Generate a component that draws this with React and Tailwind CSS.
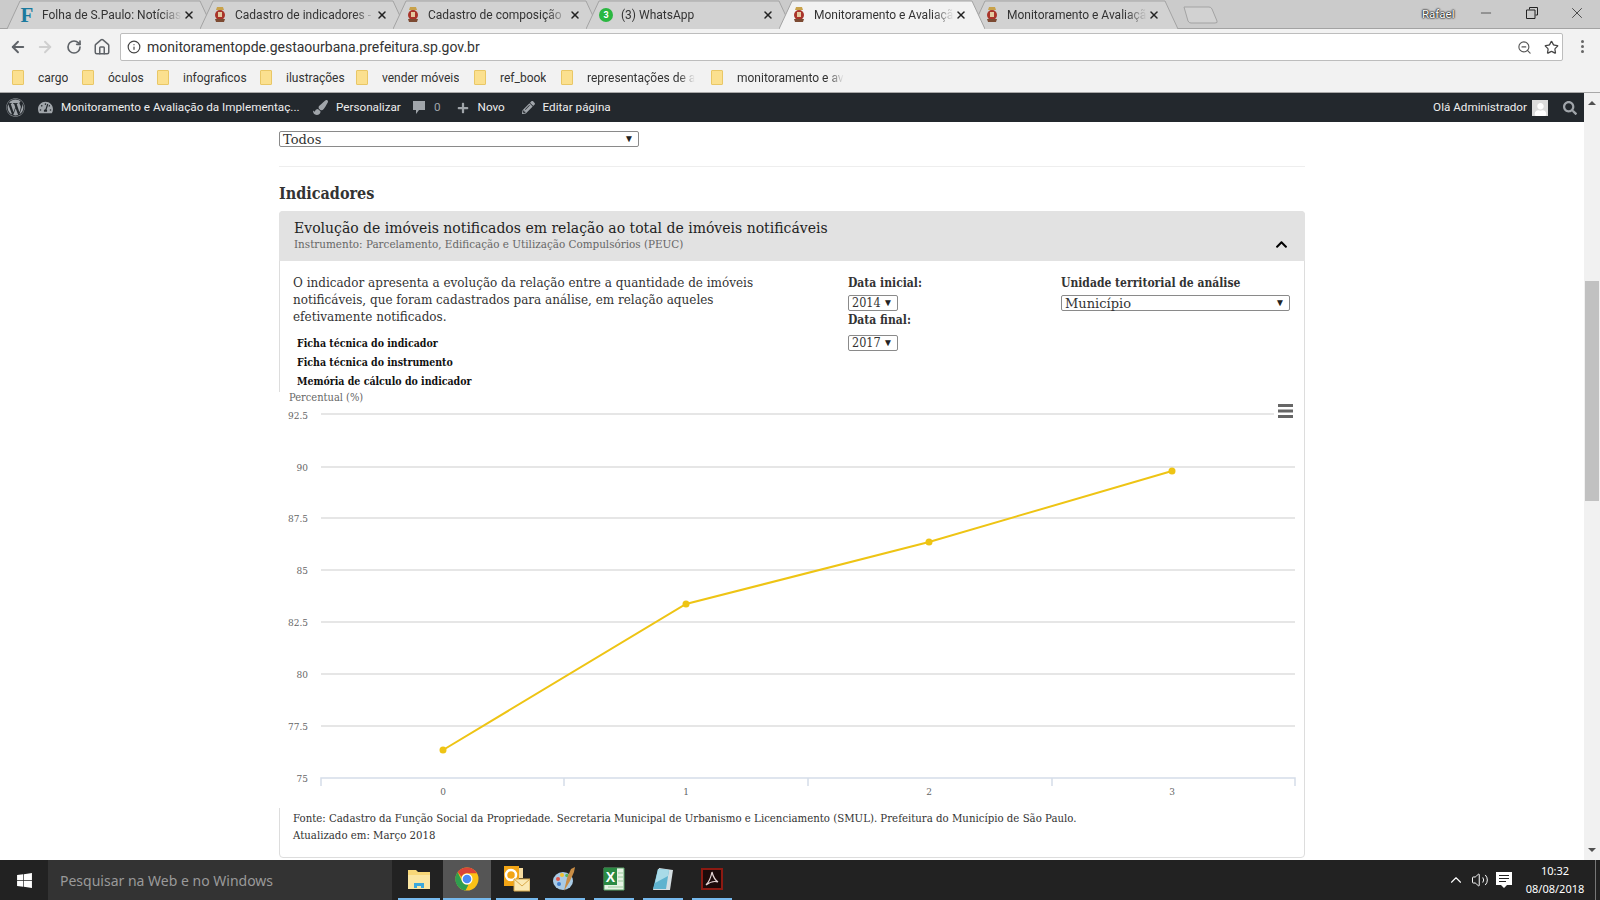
import React from "react";
import { ArrowLeft, ArrowRight, RotateCw, Home, Info, ZoomOut, Star, X, Minus, ChevronUp, Volume2 } from "lucide-react";
import { FaWordpress, FaTachometerAlt, FaPaintBrush, FaPlus, FaPencilAlt, FaSearch, FaWindows, FaChevronUp, FaUser } from "react-icons/fa";

const UI = "font-['Roboto',sans-serif]";
const SLAB = "font-['DejaVu_Serif',serif]";
const SLAB_NARROW = "font-['DejaVu_Serif_Condensed','DejaVu_Serif',serif]";
const FADE = "[mask-image:linear-gradient(to_right,black_85%,transparent)]";

const TABS = [
  { id: 1, icon: "folha", title: "Folha de S.Paulo: Notícias" },
  { id: 2, icon: "sp", title: "Cadastro de indicadores - " },
  { id: 3, icon: "sp", title: "Cadastro de composição" },
  { id: 4, icon: "wa", title: "(3) WhatsApp" },
  { id: 5, icon: "sp", title: "Monitoramento e Avaliação", active: true },
  { id: 6, icon: "sp", title: "Monitoramento e Avaliação" },
];

const BOOKMARKS = [
  { label: "cargo", w: "w-[70px]" },
  { label: "óculos", w: "w-[75px]" },
  { label: "infograficos", w: "w-[103px]" },
  { label: "ilustrações", w: "w-[96px]" },
  { label: "vender móveis", w: "w-[118px]" },
  { label: "ref_book", w: "w-[87px]" },
  { label: "representações de a", w: "w-[150px]", fade: true },
  { label: "monitoramento e av", w: "w-[134px]", fade: true },
];

const Y_TICKS = [
  { label: "92.5", y: 414 },
  { label: "90", y: 467 },
  { label: "87.5", y: 518 },
  { label: "85", y: 570 },
  { label: "82.5", y: 622 },
  { label: "80", y: 674 },
  { label: "77.5", y: 726 },
];
const POINTS = [
  { x: 443, y: 750, label: "0" },
  { x: 686, y: 604, label: "1" },
  { x: 929, y: 542, label: "2" },
  { x: 1172, y: 471, label: "3" },
];

const SpIcon = () => (
  <svg width="14" height="16" viewBox="0 0 14 16" className="shrink-0">
    <path d="M4 0h6l1 3H3z" fill="#c9a24a" />
    <ellipse cx="7" cy="8" rx="5" ry="5" fill="#a9342b" />
    <path d="M5 5h4v5H5z" fill="#e3c9a0" />
    <path d="M2 12h10l-1 3H3z" fill="#7c4a32" />
  </svg>
);

const TabIcon = ({ icon }) => {
  if (icon === "folha") {
    return <span className="w-[14px] shrink-0 text-center font-['Liberation_Serif',serif] text-[21px] font-bold leading-none text-[#1b7a9e]">F</span>;
  }
  if (icon === "wa") {
    return (
      <span className="flex h-[14px] w-[14px] shrink-0 items-center justify-center rounded-full bg-[#2bb741] text-[9px] font-bold leading-none text-white">3</span>
    );
  }
  return <SpIcon />;
};

const Tab = ({ tab }) => (
  <div className={`relative h-[28px] w-[193px] shrink-0 ${tab.active ? "z-10" : ""}`}>
    <svg width="206" height="29" className="absolute left-0 top-0">
      <path d="M0 29 L13 1 H193 L206 29" fill={tab.active ? "#f2f2f2" : "#d2d2d2"} stroke="#a3a3a3" />
    </svg>
    <div className="relative flex h-full items-center pl-[13px] pt-[2px]">
      <TabIcon icon={tab.icon} />
      <span className={`ml-[8px] w-[140px] overflow-hidden whitespace-nowrap text-[12px] text-[#333] ${FADE}`}>
        {tab.title}
      </span>
      <X size={12} strokeWidth={3} className="ml-[1px] shrink-0 text-[#222]" />
    </div>
  </div>
);

const TitleBar = () => (
  <div className="flex h-[28px] items-start bg-[#cbcbcb] pl-[7px]">
    <div className="flex">
      {TABS.map((tab) => <Tab key={tab.id} tab={tab} />)}
    </div>
    <svg width="36" height="18" className="ml-[18px] mt-[6px] shrink-0">
      <path d="M1 1 H26 Q28 1 29 3 L34 15 Q35 17 32 17 H8 Q6 17 5 15 Z" fill="#d2d2d2" stroke="#a3a3a3" />
    </svg>
    <span className="ml-[203px] mt-[6px] text-[11.500px] leading-4 text-white [text-shadow:0_0_2px_#111,0_0_2px_#111,0_0_1px_#111]">Rafael</span>
    <Minus size={16} strokeWidth={1} className="ml-[23px] mt-[5px] text-[#222]" />
    <svg width="12" height="12" viewBox="0 0 12 12" className="ml-[32px] mt-[7px] text-[#222]">
      <path d="M3.500 2.500V.5h8v7.500h-2M.5 3h8.500v8.500H.5z" fill="none" stroke="currentColor" />
    </svg>
    <X size={18} strokeWidth={1} className="ml-[30px] mt-[4px] text-[#222]" />
  </div>
);

const Toolbar = () => (
  <div className="flex h-[34px] items-start border-t border-[#a3a3a3] bg-[#f2f2f2] pl-[9px] pr-[14px] pt-[4px]">
    <ArrowLeft size={18} strokeWidth={2.5} className="mt-[5px] text-[#5f6368]" />
    <ArrowRight size={18} strokeWidth={2.5} className="ml-[9px] mt-[5px] text-[#cfcfcf]" />
    <RotateCw size={16} strokeWidth={2.5} className="ml-[12px] mt-[6px] text-[#5f6368]" />
    <Home size={18} strokeWidth={2} className="ml-[11px] mt-[5px] text-[#5f6368]" />
    <div className="ml-[9px] flex h-[28px] flex-1 items-center rounded-[2px] border border-[#bdbdbd] bg-white pl-[6px] pr-[3px]">
      <Info size={14} strokeWidth={2} className="text-[#444]" />
      <span className="ml-[6px] text-[14px] text-[#333]">monitoramentopde.gestaourbana.prefeitura.sp.gov.br</span>
      <ZoomOut size={15} strokeWidth={1.8} className="ml-auto text-[#555]" />
      <Star size={15} strokeWidth={2} className="ml-[12px] text-[#444]" />
    </div>
    <div className="ml-[15px] mt-[7px] flex w-[8px] flex-col items-center gap-[2px]">
      <span className="h-[3px] w-[3px] rounded-full bg-[#666]" />
      <span className="h-[3px] w-[3px] rounded-full bg-[#666]" />
      <span className="h-[3px] w-[3px] rounded-full bg-[#666]" />
    </div>
  </div>
);

const BookmarksBar = () => (
  <div className="flex h-[31px] items-center border-b border-[#a8a8a8] bg-[#f2f2f2] pl-[12px] pt-[1px]">
    {BOOKMARKS.map((b) => (
      <div key={b.label} className={`flex shrink-0 items-center ${b.w}`}>
        <span className="h-[15px] w-[12px] shrink-0 rounded-[1px] border border-[#e9c766] bg-[#fbe08f]" />
        <span className={`ml-[14px] overflow-hidden whitespace-nowrap text-[12px] text-[#333] ${b.fade ? FADE : ""}`}>{b.label}</span>
      </div>
    ))}
  </div>
);

const AdminBar = () => (
  <div className="flex h-[29px] items-center bg-[#23282d] pl-[6px] pr-[7px] text-[11.700px] text-[#eee]">
    <FaWordpress size={19} className="text-[#a0a5aa]" />
    <FaTachometerAlt size={15} className="ml-[13px] text-[#a0a5aa]" />
    <span className="ml-[8px] w-[252px] whitespace-nowrap">Monitoramento e Avaliação da Implementaç...</span>
    <FaPaintBrush size={15} className="text-[#a0a5aa]" />
    <span className="ml-[8px] w-[76px] whitespace-nowrap">Personalizar</span>
    <svg width="14" height="15" viewBox="0 0 14 15" className="text-[#a0a5aa]">
      <path d="M1 1h12v9H7l-3 4v-4H1z" fill="currentColor" />
    </svg>
    <span className="ml-[8px] text-[#a0a5aa]">0</span>
    <FaPlus size={12} className="ml-[16px] text-[#a0a5aa]" />
    <span className="ml-[9px] w-[44px]">Novo</span>
    <FaPencilAlt size={13} className="text-[#a0a5aa]" />
    <span className="ml-[8px] whitespace-nowrap">Editar página</span>
    <span className="ml-auto whitespace-nowrap">Olá Administrador</span>
    <span className="ml-[5px] flex h-[16px] w-[16px] items-end justify-center overflow-hidden bg-[#dcdcdc] text-white">
      <FaUser size={13} />
    </span>
    <FaSearch size={14} className="ml-[15px] text-[#a0a5aa]" />
  </div>
);

const FakeSelect = ({ value, className }) => (
  <div className={`flex h-[16px] items-center justify-between rounded-[2px] border border-[#8a8a8a] bg-white pl-[3px] pr-[4px] leading-none text-[#333] ${className}`}>
    <span>{value}</span>
    <span className="font-['Liberation_Sans',sans-serif] text-[10px] leading-none text-[#222]">▼</span>
  </div>
);

const Chart = () => (
  <svg viewBox="279 392 1025 416" width="1025" height="416" className={`relative -ml-px block h-[416px] bg-white ${SLAB_NARROW}`}>
    <text x="289" y="401" fontSize="11" fill="#666">Percentual (%)</text>
    {Y_TICKS.map((t, i) => (
      <g key={t.label}>
        <line x1="321" x2={i === 0 ? 1274 : 1295} y1={t.y} y2={t.y} stroke="#e6e6e6" strokeWidth="2" />
        <text x="308" y={i === 0 ? t.y + 5 : t.y + 4} fontSize="10" fill="#666" textAnchor="end">{t.label}</text>
      </g>
    ))}
    <text x="308" y="782" fontSize="10" fill="#666" textAnchor="end">75</text>
    <path d="M1278 405.500h15M1278 411h15M1278 416.500h15" stroke="#666" strokeWidth="3" />
    <path d="M321 786V778H1295V786M564 778v8M808 778v8M1052 778v8" fill="none" stroke="#d5dde9" strokeWidth="1.500" />
    <polyline points={POINTS.map((p) => `${p.x},${p.y}`).join(" ")} fill="none" stroke="#eec414" strokeWidth="2" />
    {POINTS.map((p) => (
      <g key={p.label}>
        <circle cx={p.x} cy={p.y} r="3.500" fill="#eec414" />
        <text x={p.x} y="795" fontSize="10" fill="#666" textAnchor="middle">{p.label}</text>
      </g>
    ))}
  </svg>
);

const Panel = () => (
  <div className="mt-[7px] rounded-[4px] border border-[#ddd]">
    <div className="relative -mx-px -mt-px h-[50px] rounded-t-[4px] bg-[#e2e2e2] pl-[15px] pt-[8px]">
      <div className="text-[14px] leading-[18px] text-[#222]">Evolução de imóveis notificados em relação ao total de imóveis notificáveis</div>
      <div className="text-[10.400px] leading-[14px] text-[#666]">Instrumento: Parcelamento, Edificação e Utilização Compulsórios (PEUC)</div>
      <FaChevronUp size={13} className="absolute right-[17px] top-[27px] text-black" />
    </div>
    <div className="flex h-[131px] pl-[13px] pt-[14px] text-[#333]">
      <div className="w-[555px]">
        <p className="w-[480px] text-[12px] leading-[17px]">O indicador apresenta a evolução da relação entre a quantidade de imóveis notificáveis, que foram cadastrados para análise, em relação aqueles efetivamente notificados.</p>
        <ul className={`mt-[8px] pl-[4px] text-[10.500px] font-bold leading-[19px] text-[#111] ${SLAB_NARROW}`}>
          <li>Ficha técnica do indicador</li>
          <li>Ficha técnica do instrumento</li>
          <li>Memória de cálculo do indicador</li>
        </ul>
      </div>
      <div className={`w-[213px] text-[12px] font-bold leading-[17px] ${SLAB_NARROW}`}>
        <div>Data inicial:</div>
        <FakeSelect value="2014" className="mt-[3px] w-[50px] text-[12.500px] font-normal" />
        <div className="mt-[1px]">Data final:</div>
        <FakeSelect value="2017" className="mt-[6px] w-[50px] text-[12.500px] font-normal" />
      </div>
      <div className="text-[12px] leading-[17px]">
        <div className={`font-bold ${SLAB_NARROW}`}>Unidade territorial de análise</div>
        <FakeSelect value="Município" className="mt-[3px] w-[229px] text-[13px]" />
      </div>
    </div>
    <Chart />
    <div className="h-[49px] pl-[13px] pt-[2px] text-[10.200px] leading-[17px] text-[#333]">
      <div>Fonte: Cadastro da Função Social da Propriedade. Secretaria Municipal de Urbanismo e Licenciamento (SMUL). Prefeitura do Município de São Paulo.</div>
      <div>Atualizado em: Março 2018</div>
    </div>
  </div>
);

const Scrollbar = () => (
  <div className="flex w-[16px] shrink-0 flex-col items-center bg-[#f1f1f1]">
    <span className="mt-[8px] h-0 w-0 border-x-[4px] border-b-[4px] border-x-transparent border-b-[#505050]" />
    <div className="mt-[176px] h-[220px] w-[14px] bg-[#c1c1c1]" />
    <span className="mt-auto mb-[8px] h-0 w-0 border-x-[4px] border-t-[4px] border-x-transparent border-t-[#505050]" />
  </div>
);

const TASK_ICONS = [
  { id: "folder", w: "w-[42px]", mr: "mr-[3px]" },
  { id: "chrome", w: "w-[48px]", mr: "mr-[5px]", active: true },
  { id: "outlook", w: "w-[42px]", mr: "mr-[7px]" },
  { id: "paint", w: "w-[40px]", mr: "mr-[9px]" },
  { id: "excel", w: "w-[40px]", mr: "mr-[9px]" },
  { id: "note", w: "w-[40px]", mr: "mr-[9px]" },
  { id: "pdf", w: "w-[40px]", mr: "mr-[9px]" },
];

const TaskGlyph = ({ id }) => {
  if (id === "folder") return (
    <svg width="24" height="22" viewBox="0 0 24 22">
      <path d="M1 2h8l2 2h12v17H1z" fill="#f7d778" />
      <path d="M1 7h22v14H1z" fill="#fbe6a2" />
      <path d="M7 20v-5h10v5h-3v-2h-4v2z" fill="#3ba8dc" />
    </svg>
  );
  if (id === "chrome") return (
    <svg width="24" height="24" viewBox="0 0 24 24">
      <circle cx="12" cy="12" r="11.500" fill="#fbc116" />
      <path d="M12 .5a11.500 11.500 0 0 1 10 5.800H12a5.700 5.700 0 0 0-5.400 3.700L2.600 5.100A11.500 11.500 0 0 1 12 .5z" fill="#db4437" />
      <path d="M2.600 5.100l4.800 9.900a5.700 5.700 0 0 0 6.200 2.600l-3.100 5.900A11.500 11.500 0 0 1 2.600 5.100z" fill="#2f9e4f" />
      <circle cx="12" cy="12" r="5.500" fill="#fff" />
      <circle cx="12" cy="12" r="4.300" fill="#4a8af4" />
    </svg>
  );
  if (id === "outlook") return (
    <svg width="26" height="26" viewBox="0 0 26 26">
      <path d="M0 0h15v20H0z" fill="#f2a516" />
      <circle cx="7" cy="9" r="5" fill="none" stroke="#fff" strokeWidth="2.500" />
      <path d="M15 2h4v10h-4z" fill="#f7dca0" />
      <path d="M10 13h16v12H10z" fill="#fbe9b4" stroke="#d9a94a" />
      <path d="M10 13l8 7 8-7" fill="none" stroke="#d9a94a" />
    </svg>
  );
  if (id === "paint") return (
    <svg width="24" height="26" viewBox="0 0 24 26">
      <ellipse cx="10" cy="15" rx="10" ry="9" fill="#a9cbe6" />
      <circle cx="5" cy="13" r="2" fill="#e2574c" />
      <circle cx="9" cy="9" r="2" fill="#f2c230" />
      <circle cx="14" cy="9.500" r="1.800" fill="#5ab55e" />
      <circle cx="6" cy="18" r="2" fill="#3f7fd0" />
      <path d="M11 25l3-13 4-9 4-2-1 5-4 9z" fill="#c98d45" />
    </svg>
  );
  if (id === "excel") return (
    <svg width="22" height="24" viewBox="0 0 22 24">
      <path d="M1 1h20v22H1z" fill="#e6f3e4" stroke="#5da76a" />
      <path d="M1 1h13v17H1z" fill="#2a8a43" />
      <text x="7.500" y="15" fontSize="14" fontWeight="700" fill="#fff" textAnchor="middle" fontFamily="Liberation Sans, sans-serif">X</text>
      <path d="M15 6h5M15 10h5M15 14h5M5 20h15" stroke="#9ccb9f" />
    </svg>
  );
  if (id === "note") return (
    <svg width="22" height="24" viewBox="0 0 22 24">
      <path d="M7 1l14 2-3 20H1z" fill="#d5dee2" />
      <path d="M6 2l11 1-3 19H1z" fill="#5fb3cf" />
      <path d="M6 2l11 1-1 6-13 7z" fill="#a9dbe8" />
    </svg>
  );
  return (
    <svg width="22" height="22" viewBox="0 0 22 22">
      <path d="M0 0h22v22H0z" fill="#8c1a12" />
      <path d="M2 2h18v18H2z" fill="#1c0a0a" />
      <path d="M11 4c-1 5-3 10-6 13 4-3 9-4 12-3-3-2-5-6-6-10z" fill="none" stroke="#e8d8d8" strokeWidth="1.200" />
    </svg>
  );
};

const Taskbar = () => (
  <div className="flex h-[40px] shrink-0 items-stretch bg-[#222] font-['Noto_Sans',sans-serif] text-white">
    <div className="flex w-[48px] items-center justify-center">
      <FaWindows size={17} />
    </div>
    <div className="flex w-[344px] items-center bg-[#333] pl-[12px] text-[14px] text-[#9a9a9a]">Pesquisar na Web e no Windows</div>
    <div className="ml-[6px] flex">
      {TASK_ICONS.map((t) => (
        <div key={t.id} className={`relative flex items-center justify-center pb-[2px] ${t.w} ${t.mr} ${t.active ? "bg-[#555]" : ""}`}>
          <TaskGlyph id={t.id} />
          <span className="absolute inset-x-0 bottom-0 h-[2px] bg-[#76b9ed]" />
        </div>
      ))}
    </div>
    <div className="ml-auto flex items-center">
      <ChevronUp size={18} strokeWidth={1.5} />
      <Volume2 size={18} strokeWidth={1.3} className="ml-[6px]" />
      <svg width="16" height="16" viewBox="0 0 16 16" className="ml-[7px]">
        <path d="M0 0h16v13h-5l-3 3-3-3H0z" fill="#fff" />
        <path d="M3 3.500h10M3 6.500h10M3 9.500h7" stroke="#222" />
      </svg>
      <div className="ml-[13px] w-[60px] text-center text-[11px] leading-[18px]">
        <div>10:32</div>
        <div className="whitespace-nowrap">08/08/2018</div>
      </div>
      <span className="ml-[10px] h-full w-px bg-[#777]" />
      <span className="w-[4px]" />
    </div>
  </div>
);

export default function App() {
  return (
    <div className="flex h-[900px] w-[1600px] flex-col overflow-hidden bg-white">
      <div className={UI}>
        <TitleBar />
        <Toolbar />
        <BookmarksBar />
      </div>
      <div className="flex h-[767px] shrink-0">
        <div className="min-w-0 flex-1">
          <div className={UI}><AdminBar /></div>
          <div className={`ml-[279px] w-[1026px] pt-[9px] ${SLAB}`}>
            <FakeSelect value="Todos" className="w-[360px] text-[13px]" />
            <div className="mt-[19px] border-t border-[#eee]" />
            <h2 className={`mt-[17px] text-[16px] font-bold leading-[20px] text-[#333] ${SLAB_NARROW}`}>Indicadores</h2>
            <Panel />
          </div>
        </div>
        <Scrollbar />
      </div>
      <Taskbar />
    </div>
  );
}
